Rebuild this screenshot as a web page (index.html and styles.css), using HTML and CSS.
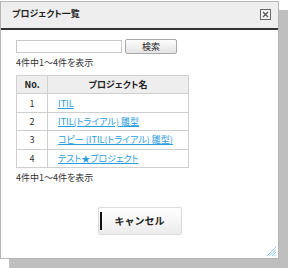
FILE: index.html
```html
<!DOCTYPE html>
<html lang="ja">
  <head>
    <meta charset="UTF-8" />
    <title>プロジェクト一覧</title>
    <link rel="stylesheet" href="styles.css">
  </head>
  <body>
    <div class="dialog">
      <div class="dialog-title">
        <span class="title-text">プロジェクト一覧</span>
        <svg class="close-icon" width="11" height="11" viewBox="0 0 11 11">
          <rect x="0.5" y="0.5" width="10" height="10" fill="#f4f4f4" stroke="#666" />
          <path d="M3 3 L8 8 M8 3 L3 8" stroke="#555" stroke-width="1.2" />
        </svg>
      </div>

      <div class="dialog-body">
        <div class="search-row">
          <input type="text" class="search-input" />
          <button class="search-button">検索</button>
        </div>
        <div class="count">4件中1～4件を表示</div>

        <table class="project-table">
          <tr>
            <th class="col-no">No.</th>
            <th>プロジェクト名</th>
          </tr>
          <tr>
            <td class="col-no">1</td>
            <td><a href="#">ITIL</a></td>
          </tr>
          <tr>
            <td class="col-no">2</td>
            <td><a href="#">ITIL(トライアル) 雛型</a></td>
          </tr>
          <tr>
            <td class="col-no">3</td>
            <td><a href="#">コピー (ITIL(トライアル) 雛型)</a></td>
          </tr>
          <tr>
            <td class="col-no">4</td>
            <td><a href="#">テスト★プロジェクト</a></td>
          </tr>
        </table>

        <div class="count">4件中1～4件を表示</div>
      </div>

      <div class="dialog-footer">
        <button class="cancel-button"><span class="focus-bar"></span><span class="cancel-label">キャンセル</span></button>
      </div>

      <svg class="resize-grip" width="9" height="9" viewBox="0 0 9 9">
        <path d="M0 9 L9 0 M2.5 9 L9 2.5 M5 9 L9 5 M7.5 9 L9 7.5" stroke="#8ac8f0" stroke-width="1" />
      </svg>
    </div>
  </body>
</html>
```

FILE: styles.css
```css
* {
  margin: 0;
  padding: 0;
  box-sizing: border-box;
}

body {
  font-family: "Noto Sans CJK JP", "Liberation Sans", sans-serif;
  font-feature-settings: "palt";
  font-size: 9px;
  color: #333;
  background: #fff;
  padding-top: 1px;
  width: 288px;
  height: 268px;
  overflow: hidden;
}

.dialog {
  position: relative;
  width: 279px;
  height: 258px;
  background: #fff;
  border: 1px solid #b4b4b4;
  box-shadow: 9px 9px 0 #bfbfbf;
}

.dialog-title {
  display: flex;
  justify-content: space-between;
  align-items: center;
  height: 28px;
  padding: 0 7px 0 11px;
  background: #eeeeee;
  border-bottom: 2px solid #333;
}

.title-text {
  font-weight: bold;
  font-size: 9px;
  color: #222;
  margin-top: -3px;
}

.close-icon {
  margin-top: -2px;
}

.dialog-body {
  padding: 9px 0 0 15px;
}

.search-row {
  display: flex;
  align-items: center;
  gap: 3px;
  height: 15px;
}

.search-input {
  width: 106px;
  height: 13px;
  border: 1px solid #c8c8c8;
  background: #fff;
}

.search-button {
  width: 52px;
  height: 15px;
  border: 1px solid #a8a8a8;
  border-radius: 2px;
  background: linear-gradient(#fdfdfd, #e4e4e4);
  font-family: inherit;
  font-size: 9px;
  color: #222;
  line-height: 13px;
}

.count {
  height: 16px;
  line-height: 14px;
  margin-top: 2px;
  font-size: 9px;
}

.project-table {
  border-collapse: collapse;
  width: 173px;
  margin-top: 3px;
  margin-bottom: 3px;
  border: 1px solid #c4c4c4;
}

.project-table th,
.project-table td {
  border: 1px solid #cfcfcf;
  height: 18.4px;
  padding: 0;
  font-size: 9px;
}

.project-table th {
  background: #eeeeee;
  font-weight: bold;
  color: #222;
}

.project-table td {
  padding-left: 10px;
}

.project-table .col-no {
  width: 31px;
  text-align: center;
  padding-left: 0;
}

.project-table a {
  color: #2a9de0;
  text-decoration: underline;
}

.dialog-footer {
  display: flex;
  justify-content: center;
  padding-top: 20px;
}

.cancel-button {
  display: flex;
  align-items: center;
  width: 84px;
  height: 28px;
  border: 1px solid #dcdcdc;
  border-radius: 2px;
  background: linear-gradient(#ffffff, #ececec);
  font-family: inherit;
  padding: 0;
}

.focus-bar {
  width: 2px;
  height: 18px;
  margin-left: 1px;
  background: #111;
}

.cancel-label {
  flex: 1;
  text-align: center;
  font-weight: bold;
  font-size: 10px;
  color: #222;
  padding-right: 3px;
}

.resize-grip {
  position: absolute;
  right: 2px;
  bottom: 2px;
}
```
